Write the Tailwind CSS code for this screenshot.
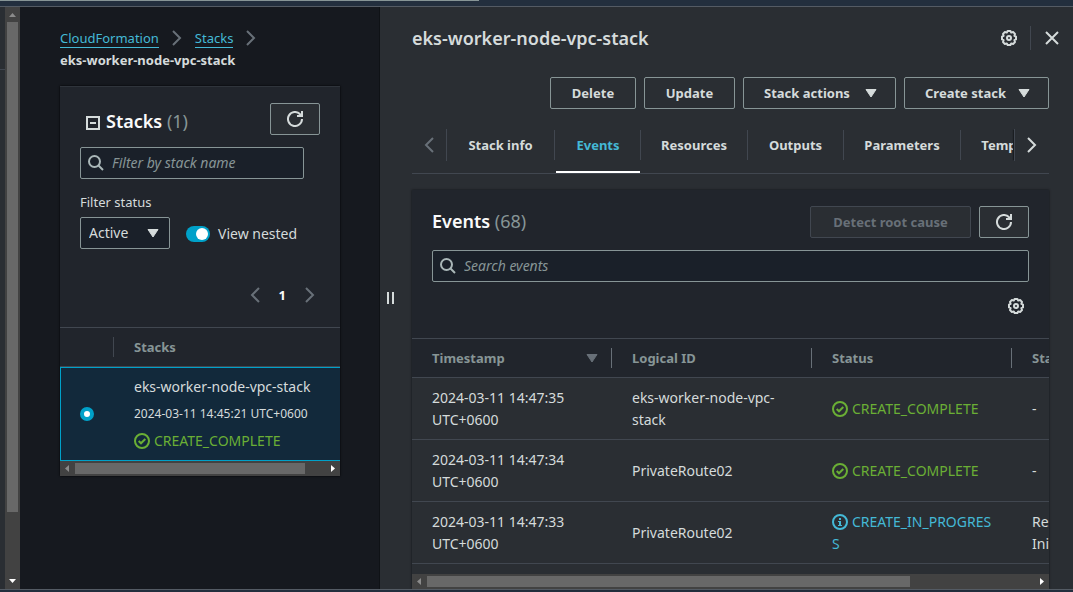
<!DOCTYPE html>
<html lang="en">
<head>
<meta charset="utf-8">
<meta name="viewport" content="width=device-width, initial-scale=1">
<title>CloudFormation - Stack eks-worker-node-vpc-stack</title>
<script src="https://cdn.jsdelivr.net/npm/@tailwindcss/browser@4"></script>
</head>
<body class="flex h-screen flex-col overflow-hidden bg-[#232f3e] font-['Noto_Sans',sans-serif] text-[13px] leading-[22px] text-[#d5dbdb]">

<svg class="hidden" aria-hidden="true">
  <symbol id="refresh" viewBox="0 0 16 16"><path d="M10 5h5V0" fill="none" stroke="currentColor" stroke-width="2"/><path d="M15 8a7 7 0 1 1-1.9-4.8L15 5" fill="none" stroke="currentColor" stroke-width="2"/></symbol>
  <symbol id="search" viewBox="0 0 16 16"><circle cx="6.5" cy="6.5" r="5.5" fill="none" stroke="currentColor" stroke-width="2"/><path d="M10.5 10.5 15 15" stroke="currentColor" stroke-width="2"/></symbol>
  <symbol id="right" viewBox="0 0 16 16"><path d="m4 1 7 7-7 7" fill="none" stroke="currentColor" stroke-width="2"/></symbol>
  <symbol id="left" viewBox="0 0 16 16"><path d="M12 1 5 8l7 7" fill="none" stroke="currentColor" stroke-width="2"/></symbol>
  <symbol id="caret" viewBox="0 0 16 16"><path d="M3 4.5h10L8 12z" fill="currentColor" stroke="currentColor" stroke-width="1" stroke-linejoin="round"/></symbol>
  <symbol id="gear" viewBox="0 0 16 16"><path d="M6.600 1h2.800l.8 1.600 1.900-.6 1.900 1.900-.6 1.900 1.600.8v2.800l-1.600.8.6 1.900-1.900 1.900-1.900-.6-.8 1.600H6.600l-.8-1.600-1.900.6L2 12.100l.6-1.900L1 9.400V6.600l1.600-.8L2 3.900 3.900 2l1.900.6z" fill="none" stroke="currentColor" stroke-width="2" stroke-linejoin="round"/><circle cx="8" cy="8" r="2" fill="none" stroke="currentColor" stroke-width="2"/></symbol>
  <symbol id="ok" viewBox="0 0 16 16"><circle cx="8" cy="8" r="7" fill="none" stroke="currentColor" stroke-width="2"/><path d="m4.700 8 2.300 2.300L11.300 6" fill="none" stroke="currentColor" stroke-width="2"/></symbol>
  <symbol id="info" viewBox="0 0 16 16"><circle cx="8" cy="8" r="7" fill="none" stroke="currentColor" stroke-width="2"/><path d="M7 4h2v2H7zM6 7h3v4h1v1H6v-1h1V8H6z" fill="currentColor"/></symbol>
</svg>

<div class="h-[7px] shrink-0 border-b border-[#545b64]"><div class="h-px w-[479px] bg-[#879596]"></div></div>

<div class="flex min-h-0 flex-1">
  <div class="w-[5px] shrink-0 bg-[#2a2e33] pt-[62px]"><div class="h-px bg-[#414750]"></div></div>
  <div class="flex w-[15px] shrink-0 flex-col items-center bg-[#424242]">
    <svg class="h-[15px] w-[15px] shrink-0 text-[#8b8b8b]" viewBox="0 0 15 15"><path d="M4 10h7L7.500 6z" fill="currentColor"/></svg>
    <div class="h-[490px] w-[11px] bg-[#686868]"></div>
    <div class="flex-1"></div>
    <svg class="h-[15px] w-[15px] shrink-0 text-white" viewBox="0 0 15 15"><path d="M4 5h7L7.500 9z" fill="currentColor"/></svg>
  </div>

  <section class="w-[360px] shrink-0 border-r border-[#0f1216] bg-[#16191f] px-10 pt-5">
    <nav aria-label="Breadcrumb" class="mb-[15px]">
      <ol class="flex flex-wrap items-center gap-x-[10px]">
        <li class="flex items-center gap-[10px]"><a href="#" class="text-[#44b9d6]"><span class="border-b border-[#44b9d6]">CloudFormation</span></a><svg class="size-4 text-[#687078]"><use href="#right"/></svg></li>
        <li class="flex items-center gap-[10px]"><a href="#" class="text-[#44b9d6]"><span class="border-b border-[#44b9d6]">Stacks</span></a><svg class="size-4 text-[#687078]"><use href="#right"/></svg></li>
        <li class="w-full font-bold">eks-worker-node-vpc-stack</li>
      </ol>
    </nav>

    <div class="mr-[-1px] border-t border-[#2f343b] bg-[#21252c] shadow-[0_0_2px_#000]">
      <div class="px-5 pt-4">
        <div class="flex items-start justify-between">
          <h2 class="flex items-center gap-[6px] pt-[7px] pl-[6px] text-lg leading-[22px] font-semibold text-[#fafafa]">
            <button type="button" aria-label="Collapse" class="pt-[3px] text-[#d5dbdb]"><svg class="h-[14px] w-[14px]" viewBox="0 0 14 14"><path d="M1 1h12v12H1zM4 7h6" fill="none" stroke="currentColor" stroke-width="2"/></svg></button>
            <span>Stacks <span class="font-normal text-[#879596]">(1)</span></span>
          </h2>
          <button type="button" aria-label="Refresh stacks" class="flex h-8 w-[50px] items-center justify-center rounded-xs border border-[#879596] bg-[#2a2e33]"><svg class="size-4"><use href="#refresh"/></svg></button>
        </div>
        <label class="mt-3 mr-4 flex h-8 items-center gap-2 rounded-xs border border-[#879596] bg-[#1a2029] pr-2 pl-[7px] text-sm">
          <svg class="size-4 shrink-0 text-[#aab7b8]"><use href="#search"/></svg>
          <input type="text" aria-label="Filter by stack name" placeholder="Filter by stack name" class="w-full min-w-0 bg-transparent outline-none placeholder:text-[#879596] placeholder:italic">
        </label>
        <label for="status" class="mt-3 block">Filter status</label>
        <div class="mt-1 flex items-center gap-4">
          <div class="relative w-[90px]">
            <select id="status" class="h-8 w-full appearance-none rounded-xs border border-[#879596] bg-[#1a2029] px-2 text-sm leading-[22px]"><option>Active</option></select>
            <svg class="pointer-events-none absolute top-2 right-[9px] size-4"><use href="#caret"/></svg>
          </div>
          <label class="flex items-center gap-2 pt-[2px] text-sm">
            <input type="checkbox" role="switch" checked class="flex h-4 w-6 appearance-none items-center justify-end rounded-full bg-[#00a1c9] px-[2px] before:size-3 before:rounded-full before:bg-white">
            View nested
          </label>
        </div>
        <div class="mt-[35px] flex items-center justify-end gap-4 pr-[2px] pb-[21px]">
          <button type="button" aria-label="Previous page" class="text-[#687078]"><svg class="size-4"><use href="#left"/></svg></button>
          <span class="font-bold text-[#fafafa]">1</span>
          <button type="button" aria-label="Next page" class="text-[#687078]"><svg class="size-4"><use href="#right"/></svg></button>
        </div>
      </div>
      <table class="w-full table-fixed border-separate border-spacing-0">
        <thead>
          <tr class="h-10">
            <th class="w-[54px] border-y border-[#414750] p-0"><div class="h-5 border-r border-[#414750]"></div></th>
            <th class="border-y border-[#414750] px-5 py-0 text-left font-bold text-[#879596]">Stacks</th>
          </tr>
        </thead>
        <tbody>
          <tr class="bg-[#12293b]">
            <td class="border-y border-l border-[#00a1c9] pl-[19px] align-middle"><input type="radio" name="stack" checked aria-label="eks-worker-node-vpc-stack" class="block h-[14px] w-[14px] appearance-none rounded-full border-4 border-[#00a1c9] bg-white"></td>
            <td class="border-y border-[#00a1c9] px-5 pt-2 pb-2 text-sm leading-[22px]">
              <div>eks-worker-node-vpc-stack</div>
              <div class="pt-[5px] pb-[5px] text-xs leading-[22px]">2024-03-11 14:45:21 UTC+0600</div>
              <div class="flex items-center gap-1 text-[#6aaf35]"><svg class="size-4"><use href="#ok"/></svg>CREATE_COMPLETE</div>
            </td>
          </tr>
        </tbody>
      </table>
      <div class="flex h-[15px] items-center bg-[#424242]">
        <svg class="h-[15px] w-[15px] text-[#8b8b8b]" viewBox="0 0 15 15"><path d="M9 4v7L5 7.500z" fill="currentColor"/></svg>
        <div class="h-[11px] w-[230px] bg-[#686868]"></div>
        <div class="flex-1"></div>
        <svg class="h-[15px] w-[15px] text-white" viewBox="0 0 15 15"><path d="M6 4v7l4-3.500z" fill="currentColor"/></svg>
      </div>
    </div>
  </section>

  <main class="flex min-w-0 flex-1 bg-[#2a2e33]">
    <div class="flex w-8 shrink-0 items-center pl-[7px]"><button type="button" aria-label="Resize panel" class="h-3 w-[7px] border-x-2 border-[#d5dbdb]"></button></div>
    <div class="mr-6 flex min-w-0 flex-1 flex-col">
      <header class="mt-[19px] -mr-[11px] flex h-6 shrink-0 items-center">
        <h1 class="flex-1 text-lg leading-6 font-semibold">eks-worker-node-vpc-stack</h1>
        <button type="button" aria-label="Preferences"><svg class="size-4"><use href="#gear"/></svg></button>
        <div class="mx-[13px] h-6 w-px bg-[#414750]"></div>
        <button type="button" aria-label="Close panel"><svg class="size-4" viewBox="0 0 16 16"><path d="m2 2 12 12M14 2 2 14" stroke="currentColor" stroke-width="2"/></svg></button>
      </header>

      <div class="mt-[27px] flex shrink-0 justify-end gap-2 font-bold">
        <button type="button" class="h-8 w-[86px] rounded-xs border border-[#879596]">Delete</button>
        <button type="button" class="h-8 w-[91px] rounded-xs border border-[#879596]">Update</button>
        <button type="button" class="flex h-8 w-[153px] items-center justify-between rounded-xs border border-[#879596] pr-4 pl-5">Stack actions<svg class="size-4"><use href="#caret"/></svg></button>
        <button type="button" class="flex h-8 w-[145px] items-center justify-between rounded-xs border border-[#879596] pr-4 pl-5">Create stack<svg class="size-4"><use href="#caret"/></svg></button>
      </div>

      <div class="mt-5 flex h-[45px] shrink-0 border-b border-[#414750] font-bold">
        <button type="button" aria-label="Previous tabs" class="flex h-8 w-[35px] shrink-0 items-center justify-center border-r border-[#414750] text-[#687078]"><svg class="size-4"><use href="#left"/></svg></button>
        <div role="tablist" class="flex min-w-0 flex-1 overflow-hidden">
          <button type="button" role="tab" class="my-[1px] h-[30px] w-[108px] shrink-0 border-r border-[#414750]">Stack info</button>
          <button type="button" role="tab" aria-selected="true" class="ml-px h-[44px] w-[84px] shrink-0 border-b-2 border-white pb-[10px] text-[#44b9d6]">Events</button>
          <button type="button" role="tab" class="my-[1px] h-[30px] w-[108px] shrink-0 border-x border-[#414750]">Resources</button>
          <button type="button" role="tab" class="my-[1px] h-[30px] w-[96px] shrink-0 border-r border-[#414750]">Outputs</button>
          <button type="button" role="tab" class="my-[1px] h-[30px] w-[117px] shrink-0 border-r border-[#414750]">Parameters</button>
          <button type="button" role="tab" class="my-[1px] h-[30px] w-[102px] shrink-0 border-r border-[#414750]">Template</button>
        </div>
        <button type="button" aria-label="Next tabs" class="flex h-8 w-[35px] shrink-0 items-center justify-center border-l border-[#414750] shadow-[-2px_0_1px_-1px_#1a1d21]"><svg class="size-4"><use href="#right"/></svg></button>
      </div>

      <section class="mt-4 flex min-h-0 flex-1 flex-col border-t border-[#21252c] bg-[#21252c] shadow-[0_0_2px_#0f1216]">
        <div class="shrink-0 px-5 pt-[15px]">
          <div class="flex items-center gap-2">
            <h2 class="flex-1 pb-[2px] text-lg leading-[22px] font-semibold text-[#fafafa]">Events <span class="font-normal text-[#879596]">(68)</span></h2>
            <button type="button" disabled class="h-8 w-[161px] rounded-xs border border-[#414750] bg-[#2a2e33] font-bold text-[#687078]">Detect root cause</button>
            <button type="button" aria-label="Refresh events" class="flex h-8 w-[50px] items-center justify-center rounded-xs border border-[#879596] bg-[#2a2e33]"><svg class="size-4"><use href="#refresh"/></svg></button>
          </div>
          <label class="mt-3 flex h-8 items-center gap-2 rounded-xs border border-[#879596] bg-[#1a2029] pr-2 pl-[7px] text-sm">
            <svg class="size-4 shrink-0 text-[#aab7b8]"><use href="#search"/></svg>
            <input type="text" aria-label="Search events" placeholder="Search events" class="w-full min-w-0 bg-transparent outline-none placeholder:text-[#879596] placeholder:italic">
          </label>
          <div class="flex justify-end pt-4 pr-[5px] pb-6"><button type="button" aria-label="Table preferences" class="block"><svg class="size-4"><use href="#gear"/></svg></button></div>
        </div>
        <div class="min-h-0 flex-1 overflow-hidden bg-[#2a2e33]">
          <table class="w-[800px] table-fixed border-separate border-spacing-0">
            <thead class="bg-[#21252c] text-left text-[#879596]">
              <tr class="h-10">
                <th class="border-y border-[#414750] py-0 pr-0 pl-5"><div class="flex h-5 items-center justify-between border-r border-[#687078] pr-[11px]">Timestamp<svg class="size-4 text-[#687078]"><use href="#caret"/></svg></div></th>
                <th class="border-y border-[#414750] py-0 pr-0 pl-5"><div class="flex h-5 items-center border-r border-[#687078]">Logical ID</div></th>
                <th class="border-y border-[#414750] py-0 pr-0 pl-5"><div class="flex h-5 items-center border-r border-[#687078]">Status</div></th>
                <th class="border-y border-[#414750] py-0 pr-0 pl-5"><div class="flex h-5 items-center">Status reason</div></th>
              </tr>
            </thead>
            <tbody class="text-sm leading-[22px] [&_td]:h-[62px] [&_td]:border-b [&_td]:border-[#414750] [&_td]:px-5 [&_td]:py-0 [&_td]:align-middle">
              <tr>
                <td>2024-03-11 14:47:35 UTC+0600</td>
                <td>eks-worker-node-vpc-stack</td>
                <td><span class="flex items-center gap-1 text-[#6aaf35]"><svg class="size-4"><use href="#ok"/></svg>CREATE_COMPLETE</span></td>
                <td>-</td>
              </tr>
              <tr>
                <td>2024-03-11 14:47:34 UTC+0600</td>
                <td>PrivateRoute02</td>
                <td><span class="flex items-center gap-1 text-[#6aaf35]"><svg class="size-4"><use href="#ok"/></svg>CREATE_COMPLETE</span></td>
                <td>-</td>
              </tr>
              <tr>
                <td>2024-03-11 14:47:33 UTC+0600</td>
                <td>PrivateRoute02</td>
                <td><span class="break-all text-[#44b9d6]"><svg class="mr-1 inline size-4 align-[-3px]"><use href="#info"/></svg>CREATE_IN_PROGRESS</span></td>
                <td>Resource creation Initiated</td>
              </tr>
            </tbody>
          </table>
        </div>
        <div class="flex h-[15px] shrink-0 items-center bg-[#424242]">
          <svg class="h-[15px] w-[15px] text-[#8b8b8b]" viewBox="0 0 15 15"><path d="M9 4v7L5 7.500z" fill="currentColor"/></svg>
          <div class="h-[11px] w-[483px] bg-[#686868]"></div>
          <div class="flex-1"></div>
          <svg class="h-[15px] w-[15px] text-white" viewBox="0 0 15 15"><path d="M6 4v7l4-3.500z" fill="currentColor"/></svg>
        </div>
      </section>
    </div>
  </main>
</div>

<div class="h-[3px] shrink-0 border-t border-[#545b64]"></div>
</body>
</html>
